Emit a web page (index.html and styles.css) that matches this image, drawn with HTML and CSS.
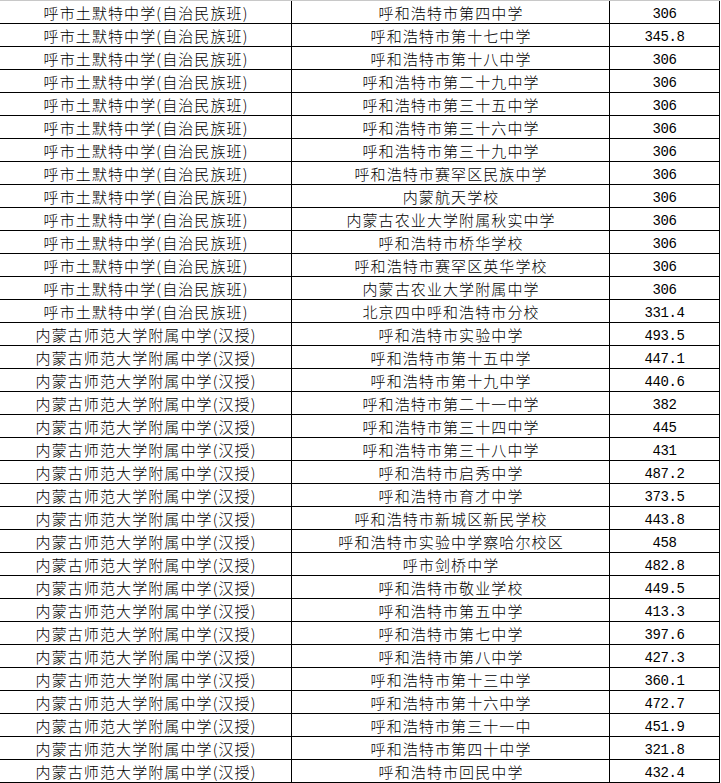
FILE: index.html
```html
<!DOCTYPE html>
<html lang="zh">
<head>
<meta charset="utf-8">
<link rel="stylesheet" href="styles.css">
</head>
<body>
<div class="sheet">
  <div class="row"><div class="c1">呼市土默特中学(自治民族班)</div><div class="c2">呼和浩特市第四中学</div><div class="c3">306</div></div>
  <div class="row"><div class="c1">呼市土默特中学(自治民族班)</div><div class="c2">呼和浩特市第十七中学</div><div class="c3">345.8</div></div>
  <div class="row"><div class="c1">呼市土默特中学(自治民族班)</div><div class="c2">呼和浩特市第十八中学</div><div class="c3">306</div></div>
  <div class="row"><div class="c1">呼市土默特中学(自治民族班)</div><div class="c2">呼和浩特市第二十九中学</div><div class="c3">306</div></div>
  <div class="row"><div class="c1">呼市土默特中学(自治民族班)</div><div class="c2">呼和浩特市第三十五中学</div><div class="c3">306</div></div>
  <div class="row"><div class="c1">呼市土默特中学(自治民族班)</div><div class="c2">呼和浩特市第三十六中学</div><div class="c3">306</div></div>
  <div class="row"><div class="c1">呼市土默特中学(自治民族班)</div><div class="c2">呼和浩特市第三十九中学</div><div class="c3">306</div></div>
  <div class="row"><div class="c1">呼市土默特中学(自治民族班)</div><div class="c2">呼和浩特市赛罕区民族中学</div><div class="c3">306</div></div>
  <div class="row"><div class="c1">呼市土默特中学(自治民族班)</div><div class="c2">内蒙航天学校</div><div class="c3">306</div></div>
  <div class="row"><div class="c1">呼市土默特中学(自治民族班)</div><div class="c2">内蒙古农业大学附属秋实中学</div><div class="c3">306</div></div>
  <div class="row"><div class="c1">呼市土默特中学(自治民族班)</div><div class="c2">呼和浩特市桥华学校</div><div class="c3">306</div></div>
  <div class="row"><div class="c1">呼市土默特中学(自治民族班)</div><div class="c2">呼和浩特市赛罕区英华学校</div><div class="c3">306</div></div>
  <div class="row"><div class="c1">呼市土默特中学(自治民族班)</div><div class="c2">内蒙古农业大学附属中学</div><div class="c3">306</div></div>
  <div class="row"><div class="c1">呼市土默特中学(自治民族班)</div><div class="c2">北京四中呼和浩特市分校</div><div class="c3">331.4</div></div>
  <div class="row"><div class="c1">内蒙古师范大学附属中学(汉授)</div><div class="c2">呼和浩特市实验中学</div><div class="c3">493.5</div></div>
  <div class="row"><div class="c1">内蒙古师范大学附属中学(汉授)</div><div class="c2">呼和浩特市第十五中学</div><div class="c3">447.1</div></div>
  <div class="row"><div class="c1">内蒙古师范大学附属中学(汉授)</div><div class="c2">呼和浩特市第十九中学</div><div class="c3">440.6</div></div>
  <div class="row"><div class="c1">内蒙古师范大学附属中学(汉授)</div><div class="c2">呼和浩特市第二十一中学</div><div class="c3">382</div></div>
  <div class="row"><div class="c1">内蒙古师范大学附属中学(汉授)</div><div class="c2">呼和浩特市第三十四中学</div><div class="c3">445</div></div>
  <div class="row"><div class="c1">内蒙古师范大学附属中学(汉授)</div><div class="c2">呼和浩特市第三十八中学</div><div class="c3">431</div></div>
  <div class="row"><div class="c1">内蒙古师范大学附属中学(汉授)</div><div class="c2">呼和浩特市启秀中学</div><div class="c3">487.2</div></div>
  <div class="row"><div class="c1">内蒙古师范大学附属中学(汉授)</div><div class="c2">呼和浩特市育才中学</div><div class="c3">373.5</div></div>
  <div class="row"><div class="c1">内蒙古师范大学附属中学(汉授)</div><div class="c2">呼和浩特市新城区新民学校</div><div class="c3">443.8</div></div>
  <div class="row"><div class="c1">内蒙古师范大学附属中学(汉授)</div><div class="c2">呼和浩特市实验中学察哈尔校区</div><div class="c3">458</div></div>
  <div class="row"><div class="c1">内蒙古师范大学附属中学(汉授)</div><div class="c2">呼市剑桥中学</div><div class="c3">482.8</div></div>
  <div class="row"><div class="c1">内蒙古师范大学附属中学(汉授)</div><div class="c2">呼和浩特市敬业学校</div><div class="c3">449.5</div></div>
  <div class="row"><div class="c1">内蒙古师范大学附属中学(汉授)</div><div class="c2">呼和浩特市第五中学</div><div class="c3">413.3</div></div>
  <div class="row"><div class="c1">内蒙古师范大学附属中学(汉授)</div><div class="c2">呼和浩特市第七中学</div><div class="c3">397.6</div></div>
  <div class="row"><div class="c1">内蒙古师范大学附属中学(汉授)</div><div class="c2">呼和浩特市第八中学</div><div class="c3">427.3</div></div>
  <div class="row"><div class="c1">内蒙古师范大学附属中学(汉授)</div><div class="c2">呼和浩特市第十三中学</div><div class="c3">360.1</div></div>
  <div class="row"><div class="c1">内蒙古师范大学附属中学(汉授)</div><div class="c2">呼和浩特市第十六中学</div><div class="c3">472.7</div></div>
  <div class="row"><div class="c1">内蒙古师范大学附属中学(汉授)</div><div class="c2">呼和浩特市第三十一中</div><div class="c3">451.9</div></div>
  <div class="row"><div class="c1">内蒙古师范大学附属中学(汉授)</div><div class="c2">呼和浩特市第四十中学</div><div class="c3">321.8</div></div>
  <div class="row"><div class="c1">内蒙古师范大学附属中学(汉授)</div><div class="c2">呼和浩特市回民中学</div><div class="c3">432.4</div></div>
</div>
</body>
</html>
```
FILE: styles.css
```css
html, body {
  margin: 0;
  padding: 0;
  background: #ffffff;
}
.sheet {
  width: 720px;
  border-top: 1px solid #c8c8c8;
  font-family: "Noto Sans CJK SC", "Noto Sans", sans-serif;
  font-size: 15px;
  color: #000;
}
.row {
  display: grid;
  grid-template-columns: 292px 318px 110px;
  height: 22px;
  border-bottom: 1px solid #000;
}
.c1, .c2, .c3 {
  border-right: 1px solid #000;
  display: flex;
  align-items: center;
  justify-content: center;
  line-height: 22px;
  white-space: nowrap;
  overflow: hidden;
  font-weight: 300;
  padding-top: 1px;
}
.c1, .c2 {
  letter-spacing: 1.1px;
  text-indent: 1.1px;
}
.c3 {
  font-family: "Liberation Mono", "DejaVu Sans Mono", monospace;
  font-size: 14px;
  letter-spacing: -0.4px;
  font-weight: normal;
  padding-top: 3px;
}
```
